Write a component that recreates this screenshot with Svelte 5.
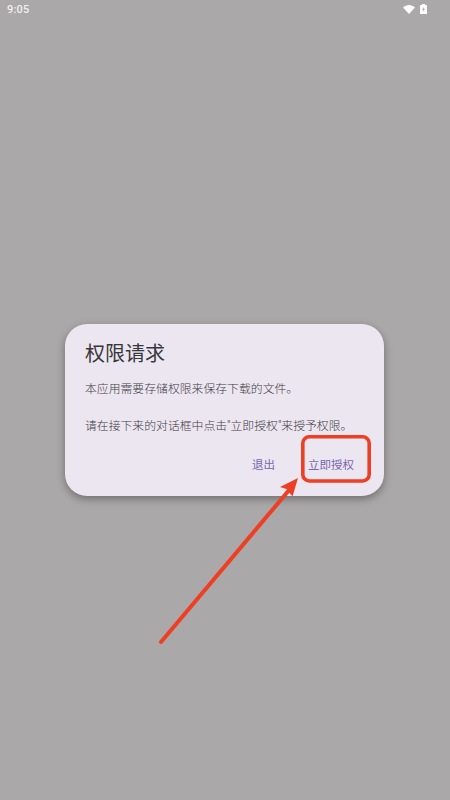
<script lang="ts">
  const message = "本应用需要存储权限来保存下载的文件。";
  const hint = "请在接下来的对话框中点击\"立即授权\"来授予权限。";
</script>

<div class="screen">
  <header class="status">
    <span class="time">9:05</span>
    <span class="icons">
      <svg width="12" height="9" viewBox="0 0 12 9"><path d="M0 2.6C1.6 1 3.7 0 6 0s4.4 1 6 2.6L6 9z" fill="#fff" /></svg>
      <svg width="7" height="10" viewBox="0 0 7 10">
        <path d="M2 0h3v1h1.500a.5.5 0 0 1 .5.500V9.500a.5.5 0 0 1-.5.500H.5a.5.5 0 0 1-.5-.5V1.500A.5.5 0 0 1 .5 1H2z" fill="#fff" />
        <path d="M3.800 2.800 2.200 6h1.100v1.800L4.800 4.800H3.700z" fill="#aaa8a8" />
      </svg>
    </span>
  </header>

  <main class="center">
    <section class="dialog">
      <h2>权限请求</h2>
      <p>{message}</p>
      <p class="second">{hint}</p>
      <div class="actions">
        <button>退出</button>
        <button>立即授权</button>
      </div>
    </section>
  </main>

  <!-- red annotation drawn over the dialog -->
  <svg class="markup" width="450" height="800" viewBox="0 0 450 800">
    <rect x="302.800" y="436.800" width="66.400" height="44.200" rx="6.500" fill="none" stroke="#ee3f24" stroke-width="3.600" />
    <path d="M161 642 290 489" fill="none" stroke="#ee3f24" stroke-width="4" stroke-linecap="round" />
    <path d="M298 478 280 487 286.500 489 292.500 496.500z" fill="#ee3f24" />
  </svg>
</div>

<style>
  :global(body) {
    margin: 0;
    background: #aaa8a8;
  }
  .screen {
    position: relative;
    width: 450px;
    height: 800px;
    overflow: hidden;
    display: flex;
    flex-direction: column;
    background: #aaa8a8;
    font-family: Roboto, "Noto Sans CJK SC", sans-serif;
  }
  .status {
    display: flex;
    align-items: flex-start;
    justify-content: space-between;
    height: 24px;
    padding: 3px 23px 0 7px;
    box-sizing: border-box;
    color: #f1f0f0;
  }
  .time {
    font-size: 11px;
    font-weight: 500;
    line-height: 14px;
    letter-spacing: 0.2px;
  }
  .icons {
    display: flex;
    align-items: flex-start;
    gap: 5px;
    padding-top: 1px;
  }
  .icons svg {
    display: block;
  }
  .icons svg:first-child {
    margin-top: 1px;
  }
  .center {
    flex: 1;
    padding: 300px 66px 0 65px;
  }
  .dialog {
    box-sizing: border-box;
    height: 172px;
    padding: 17px 14px 0 20px;
    background: #ece6f0;
    border-radius: 22px;
    box-shadow: 0 3px 8px rgba(0, 0, 0, 0.35);
  }
  h2 {
    margin: 0 0 14px;
    font-size: 20px;
    font-weight: 400;
    line-height: 26px;
    color: #38363b;
  }
  p {
    margin: 0;
    font-size: 11.850px;
    font-weight: 300;
    line-height: 16px;
    color: #3f3b45;
    white-space: nowrap;
  }
  .second {
    margin-top: 21px;
  }
  .actions {
    display: flex;
    justify-content: flex-end;
    gap: 33px;
    margin-top: 23px;
    padding-right: 16px;
  }
  button {
    padding: 0;
    border: none;
    background: none;
    font: inherit;
    font-size: 11.500px;
    font-weight: 400;
    line-height: 16px;
    color: #7a66b2;
  }
  .markup {
    position: absolute;
    left: 0;
    top: 0;
    pointer-events: none;
  }
</style>
